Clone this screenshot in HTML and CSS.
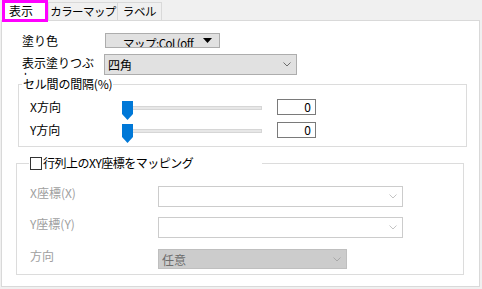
FILE: index.html
```html
<!DOCTYPE html>
<html lang="ja">
<head>
<meta charset="utf-8">
<link rel="stylesheet" href="styles.css">
</head>
<body>
<div class="tabs">
  <div class="tab tab-active">表示</div>
  <div class="tab tab-color">カラーマップ</div>
  <div class="tab tab-label">ラベル</div>
</div>
<div class="panel">
  <div class="row r1">
    <span class="lbl lbl-w1">塗り色</span>
    <div class="btn">
      <span class="btn-text">マップ:Col (off</span>
      <svg class="tri" width="9" height="5" viewBox="0 0 9 5"><path d="M0 0H9L4.5 5Z" fill="#000"/></svg>
    </div>
  </div>
  <div class="row r2">
    <span class="lbl lbl-wrap">表示塗りつぶし</span>
    <div class="combo combo-main">
      <span class="combo-text">四角</span>
      <svg class="chev" width="8" height="5" viewBox="0 0 8 5"><polyline points="0.5,0.5 4,4 7.5,0.5" fill="none" stroke="#6d6d6d" stroke-width="1"/></svg>
    </div>
  </div>
  <fieldset class="grp grp1">
    <legend class="legend1">セル間の間隔(%)</legend>
    <div class="srow srow-x">
      <span class="slbl">X方向</span>
      <div class="slider">
        <div class="track"></div>
        <svg class="thumb" width="11" height="20" viewBox="0 0 11 20"><path d="M0 0H11V13L5.5 19L0 13Z" fill="#0078d7"/></svg>
      </div>
      <div class="num">0</div>
    </div>
    <div class="srow srow-y">
      <span class="slbl">Y方向</span>
      <div class="slider">
        <div class="track"></div>
        <svg class="thumb" width="11" height="20" viewBox="0 0 11 20"><path d="M0 0H11V13L5.5 19L0 13Z" fill="#0078d7"/></svg>
      </div>
      <div class="num">0</div>
    </div>
  </fieldset>
  <fieldset class="grp grp2">
    <legend class="legend2"><span class="check"></span><span class="legend2-text">行列上のXY座標をマッピング</span></legend>
    <div class="drow drow-x">
      <span class="dlbl">X座標(X)</span>
      <div class="dcombo">
        <svg class="chev" width="8" height="5" viewBox="0 0 8 5"><polyline points="0.5,0.5 4,4 7.5,0.5" fill="none" stroke="#c4c4c4" stroke-width="1"/></svg>
      </div>
    </div>
    <div class="drow drow-y">
      <span class="dlbl">Y座標(Y)</span>
      <div class="dcombo">
        <svg class="chev" width="8" height="5" viewBox="0 0 8 5"><polyline points="0.5,0.5 4,4 7.5,0.5" fill="none" stroke="#c4c4c4" stroke-width="1"/></svg>
      </div>
    </div>
    <div class="drow drow-dir">
      <span class="dlbl">方向</span>
      <div class="dcombo dcombo-fill">
        <span class="combo-text dis-text">任意</span>
        <svg class="chev" width="8" height="5" viewBox="0 0 8 5"><polyline points="0.5,0.5 4,4 7.5,0.5" fill="none" stroke="#a8a8a8" stroke-width="1"/></svg>
      </div>
    </div>
  </fieldset>
</div>
</body>
</html>
```
FILE: styles.css
```css
* { box-sizing: border-box; }
html, body { margin: 0; padding: 0; }
body {
  width: 482px;
  height: 289px;
  background: #f0f0f0;
  font-family: "Noto Sans CJK JP", "Noto Sans", sans-serif;
  font-size: 12px;
  color: #000;
  overflow: hidden;
}

/* tabs */
.tabs {
  display: flex;
  align-items: flex-end;
  height: 20px;
  padding-left: 2px;
  position: relative;
  z-index: 1;
}
.tab {
  height: 18px;
  border: 1px solid #d9d9d9;
  border-bottom: none;
  background: #f0f0f0;
  line-height: 16px;
  text-align: center;
  white-space: nowrap;
  overflow: hidden;
}
.tab-active {
  width: 46px;
  height: 22px;
  margin-bottom: -2px;
  border: 3px solid #ff00ff;
  background: #fff;
  line-height: 15px;
  text-align: left;
  padding-left: 4px;
}
.tab-color { width: 70px; font-size: 11.5px; letter-spacing: -0.6px; }
.tab-label { width: 45px; margin-left: -1px; font-size: 11.5px; letter-spacing: -0.4px; }

/* panel */
.panel {
  margin-left: 1px;
  width: 479px;
  height: 267px;
  border: 1px solid #d9d9d9;
  background: #fff;
}
.row { display: flex; margin-left: 20px; }
.r1 { margin-top: 12px; height: 15px; align-items: center; }
.r2 { margin-top: 6px; height: 21px; align-items: flex-start; }
.lbl { line-height: 15px; white-space: nowrap; }
.lbl-w1 { width: 83px; }
.lbl-wrap {
  width: 82px;
  height: 21px;
  white-space: normal;
  overflow: hidden;
  padding-top: 1px;
}

.btn {
  width: 115px;
  height: 15px;
  border: 1px solid #adadad;
  background: #e1e1e1;
  display: flex;
  align-items: flex-start;
  overflow: hidden;
}
.btn-text {
  padding-left: 17px;
  padding-top: 2px;
  line-height: 14px;
  white-space: nowrap;
  height: 13px;
  overflow: hidden;
  width: 92px;
  font-size: 11.5px;
  letter-spacing: -0.5px;
}
.tri { margin: 4px 7px 0 auto; flex: none; }

.combo {
  display: flex;
  align-items: center;
  height: 21px;
  border: 1px solid #adadad;
  background: #e1e1e1;
}
.combo-main { width: 193px; }
.combo-text { padding-left: 3px; line-height: 15px; }
.chev { margin-left: auto; margin-right: 5px; flex: none; }

/* group boxes */
.grp {
  margin: 0;
  padding: 0;
  border: 1px solid #dcdcdc;
  min-width: 0;
}
.grp1 {
  margin: 2px 0 0 16px;
  width: 449px;
  height: 70px;
}
.legend1 {
  margin-left: 3px;
  padding: 0 1px;
  line-height: 14px;
  letter-spacing: -0.2px;
}
.srow {
  display: flex;
  align-items: center;
  height: 16px;
  margin-left: 11px;
}
.srow-x { margin-top: 8px; }
.srow-y { margin-top: 7px; }
.slbl { width: 92px; line-height: 14px; }
.slider {
  position: relative;
  width: 140px;
  height: 20px;
  align-self: flex-start;
  margin-right: 15px;
}
.track {
  position: absolute;
  left: 0;
  right: 0;
  top: 7px;
  height: 4px;
  background: #e7e7e7;
  border: 1px solid #d6d6d6;
}
.thumb { position: absolute; left: 0; top: 2px; }
.num {
  width: 39px;
  height: 16px;
  border: 1px solid #7a7a7a;
  text-align: right;
  padding-right: 4px;
  line-height: 14px;
}

.grp2 {
  margin: 9px 0 0 14px;
  width: 448px;
  height: 119px;
}
.legend2 {
  margin-left: 12px;
  padding: 0 0 0 1px;
  width: 233px;
  display: flex;
  align-items: center;
  line-height: 14px;
}
.legend2-text { letter-spacing: -0.5px; white-space: nowrap; }
.check {
  width: 12px;
  height: 13px;
  border: 1px solid #333;
  margin-right: 1px;
  flex: none;
}
.drow {
  display: flex;
  align-items: flex-start;
  margin-left: 13px;
}
.drow-x { margin-top: 16px; }
.drow-y { margin-top: 10px; }
.drow-dir { margin-top: 11px; }
.dlbl {
  width: 128px;
  color: #a0a0a0;
  line-height: 14px;
  white-space: nowrap;
}
.dcombo {
  width: 245px;
  height: 21px;
  border: 1px solid #cccccc;
  background: #fff;
  display: flex;
  align-items: center;
}
.dcombo-fill {
  width: 189px;
  height: 20px;
  background: #cccccc;
  border-color: #bfbfbf;
}
.dis-text { color: #6d6d6d; }
```
